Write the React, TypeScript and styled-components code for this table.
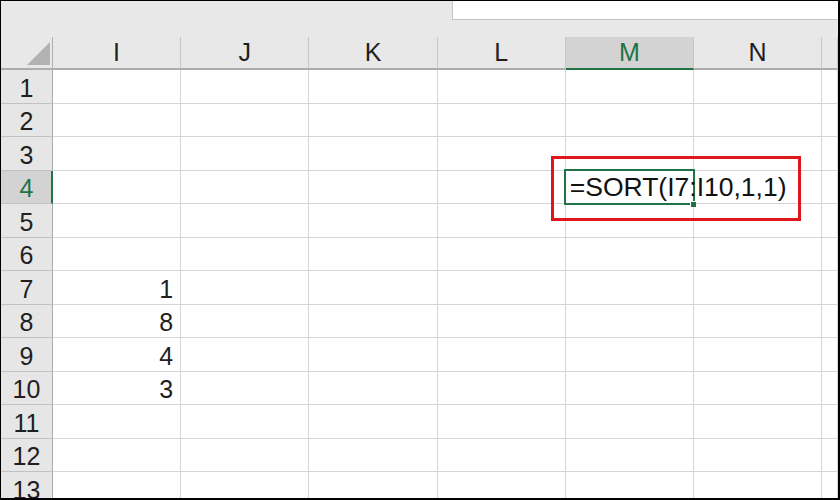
import React from "react";
import styled, { createGlobalStyle } from "styled-components";

const Global = createGlobalStyle`
  html, body { margin: 0; padding: 0; background: #fff; }
  * { box-sizing: border-box; }
`;

const GREEN = "#217346";
const COLS = ["I", "J", "K", "L", "M", "N", ""];
const ROWS = 13;
const VALUES: Record<number, string> = { 7: "1", 8: "8", 9: "4", 10: "3" };

const Frame = styled.div`
  width: 840px;
  height: 500px;
  border-top: 1px solid #000;
  border-left: 1px solid #000;
  border-right: 2px solid #000;
  border-bottom: 2px solid #000;
  overflow: hidden;
  background: #fff;
  font-family: "Liberation Sans", Arial, sans-serif;
  color: #1f1f1f;
`;

const TopStrip = styled.div`
  height: 36px;
  background: #e8e8e8;
  display: flex;
  justify-content: flex-end;
  align-items: flex-start;
`;

const FormulaField = styled.div`
  width: 386px;
  height: 19px;
  background: #fff;
  border-left: 1px solid #c4c4c4;
  border-bottom: 1px solid #c4c4c4;
`;

const Sheet = styled.div`
  display: grid;
  grid-template-columns: 52px repeat(6, 128.2px) 1fr;
  grid-template-rows: 33px;
  grid-auto-rows: 33.5px;
`;

const Corner = styled.div`
  background: #e8e8e8;
  border-right: 1px solid #b0b0b0;
  border-bottom: 2px solid #acacac;
  display: flex;
  justify-content: flex-end;
  align-items: flex-end;
  padding: 0 2px 3px 0;
`;

const ColHeader = styled.div<{ $active?: boolean }>`
  background: ${(p) => (p.$active ? "#d3d3d3" : "#e8e8e8")};
  border-right: 1px solid #c6c6c6;
  border-bottom: 2px solid ${(p) => (p.$active ? GREEN : "#acacac")};
  color: ${(p) => (p.$active ? GREEN : "#1f1f1f")};
  font-size: 25px;
  display: flex;
  justify-content: center;
  align-items: flex-end;
  padding-bottom: 3px;
  line-height: 1;
`;

const RowHeader = styled.div<{ $active?: boolean }>`
  background: ${(p) => (p.$active ? "#d3d3d3" : "#e6e6e6")};
  border-right: ${(p) => (p.$active ? `2px solid ${GREEN}` : "1px solid #acacac")};
  border-bottom: 1px solid #c2c2c2;
  color: ${(p) => (p.$active ? GREEN : "#1f1f1f")};
  font-size: 25px;
  line-height: 1;
  display: flex;
  justify-content: center;
  align-items: flex-end;
  padding-bottom: 2px;
  padding-left: ${(p) => (p.$active ? "1px" : "0")};
`;

const Cell = styled.div`
  position: relative;
  border-right: 1px solid #d6d6d6;
  border-bottom: 1px solid #d6d6d6;
  font-size: 25px;
  line-height: 1;
  display: flex;
  justify-content: flex-end;
  align-items: flex-end;
  padding: 0 7px 2px 0;
`;

const ActiveCell = styled(Cell)`
  justify-content: flex-start;
  padding: 0 0 3px 4px;
  z-index: 2;
  overflow: visible;
  border-right-color: transparent;
`;

const Selection = styled.div`
  position: absolute;
  left: -2px;
  top: -2px;
  right: -2px;
  bottom: -2px;
  border: 2px solid ${GREEN};
  pointer-events: none;
`;

const FillHandle = styled.div`
  position: absolute;
  right: -3px;
  bottom: -4px;
  width: 6px;
  height: 6px;
  background: ${GREEN};
  border-left: 1px solid #fff;
  border-top: 1px solid #fff;
`;

const FormulaText = styled.span`
  position: relative;
  white-space: nowrap;
  font-size: 26.5px;
  color: #111;
`;

const Annotation = styled.div`
  position: absolute;
  left: -15px;
  top: -15px;
  width: 250px;
  height: 65px;
  border: 3px solid #e0161b;
  pointer-events: none;
`;

export default function App() {
  return (
    <>
      <Global />
      <Frame>
        <TopStrip>
          <FormulaField />
        </TopStrip>
        <Sheet>
          <Corner>
            <svg width="23" height="23" viewBox="0 0 23 23">
              <polygon points="23,0 23,23 0,23" fill="#b3b3b3" />
            </svg>
          </Corner>
          {COLS.map((c, i) => (
            <ColHeader key={i} $active={c === "M"}>
              {c}
            </ColHeader>
          ))}
          {Array.from({ length: ROWS }, (_, r) => {
            const row = r + 1;
            return (
              <React.Fragment key={row}>
                <RowHeader $active={row === 4}>{row}</RowHeader>
                {COLS.map((c, ci) => {
                  if (row === 4 && c === "M") {
                    return (
                      <ActiveCell key={ci}>
                        <Selection />
                        <FillHandle />
                        <FormulaText>=SORT(I7:I10,1,1)</FormulaText>
                        <Annotation />
                      </ActiveCell>
                    );
                  }
                  return <Cell key={ci}>{c === "I" ? VALUES[row] ?? "" : ""}</Cell>;
                })}
              </React.Fragment>
            );
          })}
        </Sheet>
      </Frame>
    </>
  );
}
